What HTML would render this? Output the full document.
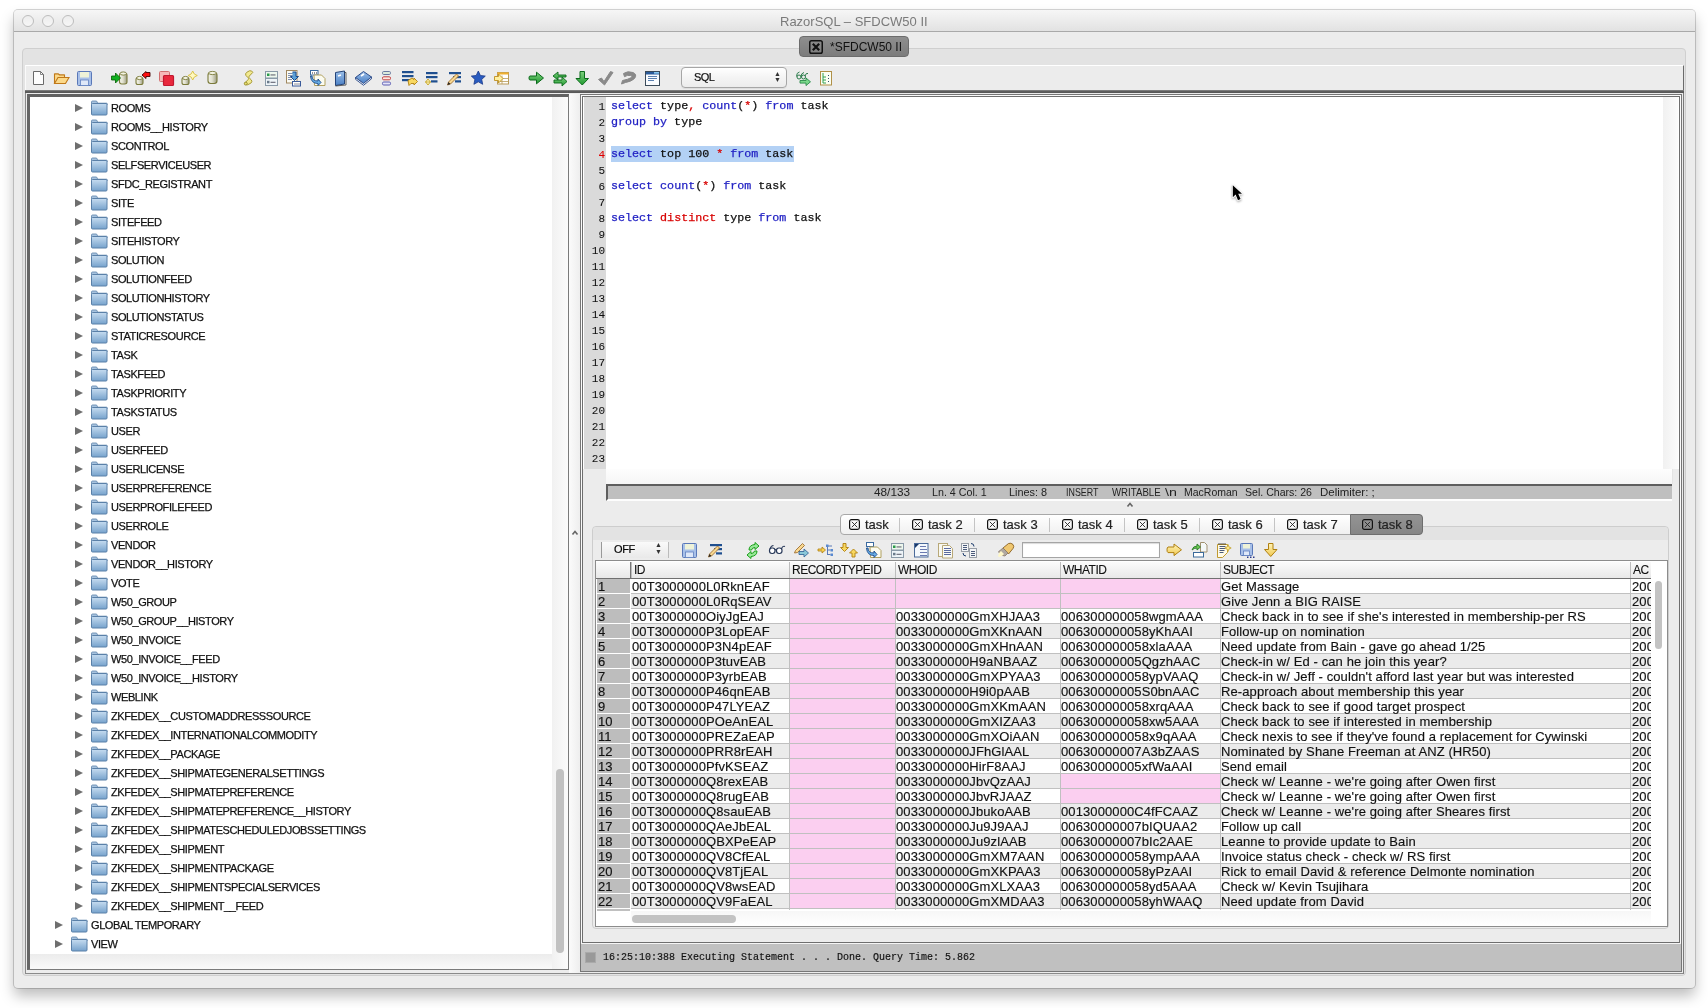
<!DOCTYPE html><html><head><meta charset="utf-8"><title>RazorSQL</title><style>
*{margin:0;padding:0;box-sizing:border-box}
html,body{width:1708px;height:1008px;overflow:hidden;background:#fff;font-family:"Liberation Sans",sans-serif;color:#000}
.a{position:absolute}
.t{position:absolute;white-space:nowrap;line-height:1}
#root{position:absolute;left:0;top:0;width:1708px;height:1008px;will-change:transform}

.tri{width:0;height:0;border-left:8px solid #6e6e6e;border-top:4.5px solid transparent;border-bottom:4.5px solid transparent}
.fold{width:17px;height:14px;border-radius:2px;background:linear-gradient(#b9d3ea,#7fa8cf);border:1px solid #6a8fb3}
.tr{font-size:11px;letter-spacing:-0.4px;color:#111;-webkit-text-stroke:0.25px #111}
.ln{font-family:"Liberation Mono",monospace;font-size:11px;color:#111;-webkit-text-stroke:0.05px currentColor}
.code{font-family:"Liberation Mono",monospace;font-size:11.7px;color:#111;-webkit-text-stroke:0.25px currentColor}
.stt{font-size:11px;color:#222;transform-origin:0 0}
.tabt{font-size:13px;color:#222;-webkit-text-stroke:0.2px #222}
.xb{width:10px;height:10px}
.hd{font-size:12px;letter-spacing:-0.5px;color:#111;-webkit-text-stroke:0.1px #111}
.rn{font-size:13px;color:#111;-webkit-text-stroke:0.15px #111}
.cell{font-size:13px;letter-spacing:0.1px;color:#111;-webkit-text-stroke:0.15px #111}
</style></head><body><div id="root">
<div class="a" style="left:14px;top:10px;width:1681px;height:978px;background:#ececec;border-radius:4px 4px 4px 4px;box-shadow:0 8px 14px rgba(0,0,0,0.26),0 0 0 1px rgba(0,0,0,0.17)"></div>
<div class="a" style="left:14px;top:10px;width:1681px;height:22px;border-radius:4px 4px 0 0;background:linear-gradient(#f6f6f6,#ececec 50%,#e2e2e2);border-bottom:1px solid #a9a9a9"></div>
<div class="a" style="left:22px;top:15px;width:12px;height:12px;border-radius:50%;border:1px solid #bdbdbd;background:linear-gradient(#ededed,#f6f6f6)"></div>
<div class="a" style="left:42px;top:15px;width:12px;height:12px;border-radius:50%;border:1px solid #bdbdbd;background:linear-gradient(#ededed,#f6f6f6)"></div>
<div class="a" style="left:62px;top:15px;width:12px;height:12px;border-radius:50%;border:1px solid #bdbdbd;background:linear-gradient(#ededed,#f6f6f6)"></div>
<div class="t" style="left:780px;top:15px;font-size:13px;color:#7a7a7a">RazorSQL &ndash; SFDCW50 II</div>
<div class="a" style="left:22px;top:48px;width:1664px;height:928px;border:1px solid #cfcfcf;border-radius:4px;background:#e3e3e3"></div>
<div class="a" style="left:799px;top:36px;width:110px;height:21px;border-radius:4px;background:linear-gradient(#8e8e8e,#7c7c7c);border:1px solid #6c6c6c"></div>
<svg class="a" style="left:809px;top:40px" width="14" height="14"><rect x="0.75" y="0.75" width="12.5" height="12.5" rx="1.8" fill="none" stroke="#111" stroke-width="1.5"/><path d="M3.8 3.8 L10.2 10.2 M10.2 3.8 L3.8 10.2" stroke="#111" stroke-width="2.2"/></svg>
<div class="t" style="left:830px;top:41px;font-size:12px;color:#111">*SFDCW50 II</div>
<div class="a" style="left:25px;top:65px;width:1659px;height:28px;background:#ececec;border-top:1px solid #fff;border-left:1px solid #fafafa;border-right:1px solid #6a6a6a"></div>
<div class="a" style="left:25px;top:90px;width:1659px;height:3px;background:linear-gradient(#8a8a8a,#555 60%,#5a5a5a)"></div>
<div class="a" style="left:681px;top:67px;width:106px;height:21px;border:1px solid #a6a6a6;border-radius:4px;background:linear-gradient(#ffffff,#f4f4f4 50%,#ececec);box-shadow:0 1px 0 rgba(0,0,0,0.06)"></div>
<div class="t" style="left:694px;top:72px;font-size:11px;letter-spacing:-0.6px;color:#111;-webkit-text-stroke:0.2px #111">SQL</div>
<div class="t" style="left:774px;top:71px;font-size:7px;line-height:6px;color:#333">&#x25B2;<br>&#x25BC;</div>
<div class="a" style="left:25px;top:93px;width:1659px;height:881px;background:#ececec;border-left:1px solid #8a8a8a;border-bottom:1px solid #8a8a8a;border-right:1px solid #7a7a7a"></div>
<div class="a" style="left:27px;top:94px;width:542px;height:876px;border-top:3px solid #626262;border-left:3px solid #666;border-right:1px solid #7a7a7a;border-bottom:1px solid #7a7a7a;background:#fff"></div>
<div class="a" style="left:569px;top:94px;width:11px;height:879px;background:linear-gradient(90deg,#fbfbfb,#eeeeee)"></div>
<div class="a" style="left:30px;top:954px;width:522px;height:15px;background:linear-gradient(#ececec,#f9f9f9)"></div>
<div class="a" style="left:552px;top:97px;width:16px;height:872px;background:linear-gradient(90deg,#f1f1f1,#fbfbfb)"></div>
<div class="a" style="left:556px;top:769px;width:8px;height:184px;border-radius:4px;background:#c1c1c1"></div>
<div class="a tri" style="left:75px;top:104px"></div>
<div class="t tr" style="left:111px;top:103px">ROOMS</div>
<div class="a tri" style="left:75px;top:123px"></div>
<div class="t tr" style="left:111px;top:122px">ROOMS__HISTORY</div>
<div class="a tri" style="left:75px;top:142px"></div>
<div class="t tr" style="left:111px;top:141px">SCONTROL</div>
<div class="a tri" style="left:75px;top:161px"></div>
<div class="t tr" style="left:111px;top:160px">SELFSERVICEUSER</div>
<div class="a tri" style="left:75px;top:180px"></div>
<div class="t tr" style="left:111px;top:179px">SFDC_REGISTRANT</div>
<div class="a tri" style="left:75px;top:199px"></div>
<div class="t tr" style="left:111px;top:198px">SITE</div>
<div class="a tri" style="left:75px;top:218px"></div>
<div class="t tr" style="left:111px;top:217px">SITEFEED</div>
<div class="a tri" style="left:75px;top:237px"></div>
<div class="t tr" style="left:111px;top:236px">SITEHISTORY</div>
<div class="a tri" style="left:75px;top:256px"></div>
<div class="t tr" style="left:111px;top:255px">SOLUTION</div>
<div class="a tri" style="left:75px;top:275px"></div>
<div class="t tr" style="left:111px;top:274px">SOLUTIONFEED</div>
<div class="a tri" style="left:75px;top:294px"></div>
<div class="t tr" style="left:111px;top:293px">SOLUTIONHISTORY</div>
<div class="a tri" style="left:75px;top:313px"></div>
<div class="t tr" style="left:111px;top:312px">SOLUTIONSTATUS</div>
<div class="a tri" style="left:75px;top:332px"></div>
<div class="t tr" style="left:111px;top:331px">STATICRESOURCE</div>
<div class="a tri" style="left:75px;top:351px"></div>
<div class="t tr" style="left:111px;top:350px">TASK</div>
<div class="a tri" style="left:75px;top:370px"></div>
<div class="t tr" style="left:111px;top:369px">TASKFEED</div>
<div class="a tri" style="left:75px;top:389px"></div>
<div class="t tr" style="left:111px;top:388px">TASKPRIORITY</div>
<div class="a tri" style="left:75px;top:408px"></div>
<div class="t tr" style="left:111px;top:407px">TASKSTATUS</div>
<div class="a tri" style="left:75px;top:427px"></div>
<div class="t tr" style="left:111px;top:426px">USER</div>
<div class="a tri" style="left:75px;top:446px"></div>
<div class="t tr" style="left:111px;top:445px">USERFEED</div>
<div class="a tri" style="left:75px;top:465px"></div>
<div class="t tr" style="left:111px;top:464px">USERLICENSE</div>
<div class="a tri" style="left:75px;top:484px"></div>
<div class="t tr" style="left:111px;top:483px">USERPREFERENCE</div>
<div class="a tri" style="left:75px;top:503px"></div>
<div class="t tr" style="left:111px;top:502px">USERPROFILEFEED</div>
<div class="a tri" style="left:75px;top:522px"></div>
<div class="t tr" style="left:111px;top:521px">USERROLE</div>
<div class="a tri" style="left:75px;top:541px"></div>
<div class="t tr" style="left:111px;top:540px">VENDOR</div>
<div class="a tri" style="left:75px;top:560px"></div>
<div class="t tr" style="left:111px;top:559px">VENDOR__HISTORY</div>
<div class="a tri" style="left:75px;top:579px"></div>
<div class="t tr" style="left:111px;top:578px">VOTE</div>
<div class="a tri" style="left:75px;top:598px"></div>
<div class="t tr" style="left:111px;top:597px">W50_GROUP</div>
<div class="a tri" style="left:75px;top:617px"></div>
<div class="t tr" style="left:111px;top:616px">W50_GROUP__HISTORY</div>
<div class="a tri" style="left:75px;top:636px"></div>
<div class="t tr" style="left:111px;top:635px">W50_INVOICE</div>
<div class="a tri" style="left:75px;top:655px"></div>
<div class="t tr" style="left:111px;top:654px">W50_INVOICE__FEED</div>
<div class="a tri" style="left:75px;top:674px"></div>
<div class="t tr" style="left:111px;top:673px">W50_INVOICE__HISTORY</div>
<div class="a tri" style="left:75px;top:693px"></div>
<div class="t tr" style="left:111px;top:692px">WEBLINK</div>
<div class="a tri" style="left:75px;top:712px"></div>
<div class="t tr" style="left:111px;top:711px">ZKFEDEX__CUSTOMADDRESSSOURCE</div>
<div class="a tri" style="left:75px;top:731px"></div>
<div class="t tr" style="left:111px;top:730px">ZKFEDEX__INTERNATIONALCOMMODITY</div>
<div class="a tri" style="left:75px;top:750px"></div>
<div class="t tr" style="left:111px;top:749px">ZKFEDEX__PACKAGE</div>
<div class="a tri" style="left:75px;top:769px"></div>
<div class="t tr" style="left:111px;top:768px">ZKFEDEX__SHIPMATEGENERALSETTINGS</div>
<div class="a tri" style="left:75px;top:788px"></div>
<div class="t tr" style="left:111px;top:787px">ZKFEDEX__SHIPMATEPREFERENCE</div>
<div class="a tri" style="left:75px;top:807px"></div>
<div class="t tr" style="left:111px;top:806px">ZKFEDEX__SHIPMATEPREFERENCE__HISTORY</div>
<div class="a tri" style="left:75px;top:826px"></div>
<div class="t tr" style="left:111px;top:825px">ZKFEDEX__SHIPMATESCHEDULEDJOBSSETTINGS</div>
<div class="a tri" style="left:75px;top:845px"></div>
<div class="t tr" style="left:111px;top:844px">ZKFEDEX__SHIPMENT</div>
<div class="a tri" style="left:75px;top:864px"></div>
<div class="t tr" style="left:111px;top:863px">ZKFEDEX__SHIPMENTPACKAGE</div>
<div class="a tri" style="left:75px;top:883px"></div>
<div class="t tr" style="left:111px;top:882px">ZKFEDEX__SHIPMENTSPECIALSERVICES</div>
<div class="a tri" style="left:75px;top:902px"></div>
<div class="t tr" style="left:111px;top:901px">ZKFEDEX__SHIPMENT__FEED</div>
<div class="a tri" style="left:55px;top:921px"></div>
<div class="t tr" style="left:91px;top:920px">GLOBAL TEMPORARY</div>
<div class="a tri" style="left:55px;top:940px"></div>
<div class="t tr" style="left:91px;top:939px">VIEW</div>
<svg class="a" style="left:571px;top:529px" width="8" height="8"><path d="M1.5 5.5 L4 2.5 L6.5 5.5" fill="none" stroke="#666" stroke-width="1.6"/></svg>
<div class="a" style="left:580px;top:94px;width:1102px;height:878px;border:1px solid #777;background:#fafafa"></div>
<div class="a" style="left:582px;top:96px;width:1098px;height:847px;border:1px solid #6e6e6e;background:#ececec"></div>
<div class="a" style="left:583px;top:97px;width:1096px;height:372px;background:#fff"></div>
<div class="a" style="left:584px;top:97px;width:22px;height:372px;background:#dadada"></div>
<div class="a" style="left:1663px;top:97px;width:15px;height:372px;background:linear-gradient(90deg,#f1f1f1,#fbfbfb)"></div>
<div class="a" style="left:606px;top:469px;width:1067px;height:15px;background:linear-gradient(#fdfdfd,#f6f6f6);border-right:1px solid #e4e4e4"></div>
<div class="t ln" style="right:1103px;top:102px;color:#111">1</div>
<div class="t ln" style="right:1103px;top:118px;color:#111">2</div>
<div class="t ln" style="right:1103px;top:134px;color:#111">3</div>
<div class="t ln" style="right:1103px;top:150px;color:#e00000">4</div>
<div class="t ln" style="right:1103px;top:166px;color:#111">5</div>
<div class="t ln" style="right:1103px;top:182px;color:#111">6</div>
<div class="t ln" style="right:1103px;top:198px;color:#111">7</div>
<div class="t ln" style="right:1103px;top:214px;color:#111">8</div>
<div class="t ln" style="right:1103px;top:230px;color:#111">9</div>
<div class="t ln" style="right:1103px;top:246px;color:#111">10</div>
<div class="t ln" style="right:1103px;top:262px;color:#111">11</div>
<div class="t ln" style="right:1103px;top:278px;color:#111">12</div>
<div class="t ln" style="right:1103px;top:294px;color:#111">13</div>
<div class="t ln" style="right:1103px;top:310px;color:#111">14</div>
<div class="t ln" style="right:1103px;top:326px;color:#111">15</div>
<div class="t ln" style="right:1103px;top:342px;color:#111">16</div>
<div class="t ln" style="right:1103px;top:358px;color:#111">17</div>
<div class="t ln" style="right:1103px;top:374px;color:#111">18</div>
<div class="t ln" style="right:1103px;top:390px;color:#111">19</div>
<div class="t ln" style="right:1103px;top:406px;color:#111">20</div>
<div class="t ln" style="right:1103px;top:422px;color:#111">21</div>
<div class="t ln" style="right:1103px;top:438px;color:#111">22</div>
<div class="t ln" style="right:1103px;top:454px;color:#111">23</div>
<div class="a" style="left:611px;top:146px;width:183px;height:16px;background:#b3d1f5"></div>
<div class="t code" style="left:611px;top:101px"><span style="color:#2222c4">select</span> type<span style="color:#d80000">,</span> <span style="color:#2222c4">count</span>(<span style="color:#d80000">*</span>) <span style="color:#2222c4">from</span> task</div>
<div class="t code" style="left:611px;top:117px"><span style="color:#2222c4">group by</span> type</div>
<div class="t code" style="left:611px;top:149px"><span style="color:#2222c4">select</span> top 100 <span style="color:#d80000">*</span> <span style="color:#2222c4">from</span> task</div>
<div class="t code" style="left:611px;top:181px"><span style="color:#2222c4">select</span> <span style="color:#2222c4">count</span>(<span style="color:#d80000">*</span>) <span style="color:#2222c4">from</span> task</div>
<div class="t code" style="left:611px;top:213px"><span style="color:#2222c4">select</span> <span style="color:#d80000">distinct</span> type <span style="color:#2222c4">from</span> task</div>
<div class="a" style="left:606px;top:484px;width:1066px;height:17px;background:#bfbfbf;border-top:2px solid #5e5e5e;border-left:2px solid #5e5e5e;border-bottom:2px solid #fdfdfd"></div>
<div class="t stt" style="left:874px;top:487px;transform:scaleX(1.072)">48/133</div>
<div class="t stt" style="left:932px;top:487px;transform:scaleX(0.972)">Ln. 4 Col. 1</div>
<div class="t stt" style="left:1009px;top:487px;transform:scaleX(0.986)">Lines: 8</div>
<div class="t stt" style="left:1066px;top:487px;transform:scaleX(0.807)">INSERT</div>
<div class="t stt" style="left:1112px;top:487px;transform:scaleX(0.878)">WRITABLE</div>
<div class="t stt" style="left:1165px;top:487px;transform:scaleX(1.295)">\n</div>
<div class="t stt" style="left:1184px;top:487px;transform:scaleX(0.954)">MacRoman</div>
<div class="t stt" style="left:1244.5px;top:487px;transform:scaleX(0.961)">Sel. Chars: 26</div>
<div class="t stt" style="left:1320px;top:487px;transform:scaleX(1.041)">Delimiter: ;</div>
<svg class="a" style="left:1126px;top:501px" width="8" height="8"><path d="M1.5 5.5 L4 2.5 L6.5 5.5" fill="none" stroke="#666" stroke-width="1.6"/></svg>
<div class="a" style="left:592px;top:526px;width:1077px;height:403px;border:1px solid #cdcdcd;border-radius:4px;background:#ececec"></div>
<div class="a" style="left:593px;top:527px;width:1075px;height:13px;border-radius:4px 4px 0 0;background:#e3e3e3"></div>
<div class="a" style="left:840px;top:514px;width:583px;height:21px;border:1px solid #a8a8a8;border-radius:4px;background:linear-gradient(#ffffff,#f0f0f0)"></div>
<div class="a" style="left:1350px;top:514px;width:73px;height:21px;border:1px solid #6e6e6e;border-radius:0 4px 4px 0;background:linear-gradient(#949494,#868686)"></div>
<div class="a" style="left:899px;top:518px;width:1px;height:14px;background:#c4c4c4"></div>
<div class="a" style="left:974px;top:518px;width:1px;height:14px;background:#c4c4c4"></div>
<div class="a" style="left:1049px;top:518px;width:1px;height:14px;background:#c4c4c4"></div>
<div class="a" style="left:1124px;top:518px;width:1px;height:14px;background:#c4c4c4"></div>
<div class="a" style="left:1199px;top:518px;width:1px;height:14px;background:#c4c4c4"></div>
<div class="a" style="left:1274px;top:518px;width:1px;height:14px;background:#c4c4c4"></div>
<svg class="a" style="left:849px;top:519px" width="11" height="11"><rect x="0.6" y="0.6" width="9.8" height="9.8" rx="1.8" fill="none" stroke="#111" stroke-width="1.2"/><path d="M2.8 2.8 L8.2 8.2 M8.2 2.8 L2.8 8.2" stroke="#222" stroke-width="0.9"/></svg>
<div class="t tabt" style="left:865px;top:517.5px">task</div>
<svg class="a" style="left:912px;top:519px" width="11" height="11"><rect x="0.6" y="0.6" width="9.8" height="9.8" rx="1.8" fill="none" stroke="#111" stroke-width="1.2"/><path d="M2.8 2.8 L8.2 8.2 M8.2 2.8 L2.8 8.2" stroke="#222" stroke-width="0.9"/></svg>
<div class="t tabt" style="left:928px;top:517.5px">task 2</div>
<svg class="a" style="left:987px;top:519px" width="11" height="11"><rect x="0.6" y="0.6" width="9.8" height="9.8" rx="1.8" fill="none" stroke="#111" stroke-width="1.2"/><path d="M2.8 2.8 L8.2 8.2 M8.2 2.8 L2.8 8.2" stroke="#222" stroke-width="0.9"/></svg>
<div class="t tabt" style="left:1003px;top:517.5px">task 3</div>
<svg class="a" style="left:1062px;top:519px" width="11" height="11"><rect x="0.6" y="0.6" width="9.8" height="9.8" rx="1.8" fill="none" stroke="#111" stroke-width="1.2"/><path d="M2.8 2.8 L8.2 8.2 M8.2 2.8 L2.8 8.2" stroke="#222" stroke-width="0.9"/></svg>
<div class="t tabt" style="left:1078px;top:517.5px">task 4</div>
<svg class="a" style="left:1137px;top:519px" width="11" height="11"><rect x="0.6" y="0.6" width="9.8" height="9.8" rx="1.8" fill="none" stroke="#111" stroke-width="1.2"/><path d="M2.8 2.8 L8.2 8.2 M8.2 2.8 L2.8 8.2" stroke="#222" stroke-width="0.9"/></svg>
<div class="t tabt" style="left:1153px;top:517.5px">task 5</div>
<svg class="a" style="left:1212px;top:519px" width="11" height="11"><rect x="0.6" y="0.6" width="9.8" height="9.8" rx="1.8" fill="none" stroke="#111" stroke-width="1.2"/><path d="M2.8 2.8 L8.2 8.2 M8.2 2.8 L2.8 8.2" stroke="#222" stroke-width="0.9"/></svg>
<div class="t tabt" style="left:1228px;top:517.5px">task 6</div>
<svg class="a" style="left:1287px;top:519px" width="11" height="11"><rect x="0.6" y="0.6" width="9.8" height="9.8" rx="1.8" fill="none" stroke="#111" stroke-width="1.2"/><path d="M2.8 2.8 L8.2 8.2 M8.2 2.8 L2.8 8.2" stroke="#222" stroke-width="0.9"/></svg>
<div class="t tabt" style="left:1303px;top:517.5px">task 7</div>
<svg class="a" style="left:1362px;top:519px" width="11" height="11"><rect x="0.6" y="0.6" width="9.8" height="9.8" rx="1.8" fill="none" stroke="#111" stroke-width="1.2"/><path d="M2.8 2.8 L8.2 8.2 M8.2 2.8 L2.8 8.2" stroke="#222" stroke-width="0.9"/></svg>
<div class="t tabt" style="left:1378px;top:517.5px">task 8</div>
<div class="a" style="left:601px;top:542px;width:68px;height:16px;border-left:1px solid #999;border-right:1px solid #bbb;background:linear-gradient(#fafafa,#e9e9e9)"></div>
<div class="t" style="left:614px;top:544px;font-size:11px;letter-spacing:-0.4px;-webkit-text-stroke:0.2px #111">OFF</div>
<div class="t" style="left:655px;top:541px;font-size:7px;line-height:7px;color:#333">&#x25B2;<br>&#x25BC;</div>
<div class="a" style="left:1022px;top:542px;width:138px;height:16px;border:1px solid #a5a5a5;background:#fff;box-shadow:inset 0 1px 1px rgba(0,0,0,.15)"></div>
<div class="a" style="left:595px;top:560px;width:1073px;height:367px;border:1px solid #8c8c8c;background:#fff"></div>
<div class="a" style="left:596px;top:562px;width:1055px;height:17px;background:linear-gradient(#fbfbfb,#e8e8e8);border-bottom:1px solid #707070"></div>
<div class="a" style="left:630px;top:562px;width:1px;height:16px;background:#777"></div>
<div class="a" style="left:631px;top:562px;width:1px;height:16px;background:#bdbdbd"></div>
<div class="t hd" style="left:634px;top:564px">ID</div>
<div class="a" style="left:789px;top:562px;width:1px;height:16px;background:#bdbdbd"></div>
<div class="t hd" style="left:792px;top:564px">RECORDTYPEID</div>
<div class="a" style="left:895px;top:562px;width:1px;height:16px;background:#bdbdbd"></div>
<div class="t hd" style="left:898px;top:564px">WHOID</div>
<div class="a" style="left:1060px;top:562px;width:1px;height:16px;background:#bdbdbd"></div>
<div class="t hd" style="left:1063px;top:564px">WHATID</div>
<div class="a" style="left:1220px;top:562px;width:1px;height:16px;background:#bdbdbd"></div>
<div class="t hd" style="left:1223px;top:564px">SUBJECT</div>
<div class="a" style="left:1630px;top:562px;width:1px;height:16px;background:#bdbdbd"></div>
<div class="t hd" style="left:1633px;top:564px">AC</div>
<div class="a" style="left:597px;top:579px;width:33px;height:14px;background:#bdbdbd"></div>
<div class="t rn" style="left:598px;top:580px">1</div>
<div class="a" style="left:631px;top:579px;width:1020px;height:14px;background:#ffffff"></div>
<div class="a" style="left:631px;top:593px;width:1020px;height:1px;background:#c0c0c0"></div>
<div class="t cell" style="left:632px;top:580px">00T3000000L0RknEAF</div>
<div class="a" style="left:789px;top:579px;width:106px;height:14px;background:#fbcff0"></div>
<div class="a" style="left:895px;top:579px;width:165px;height:14px;background:#fbcff0"></div>
<div class="a" style="left:1060px;top:579px;width:160px;height:14px;background:#fbcff0"></div>
<div class="t cell" style="left:1221px;top:580px">Get Massage</div>
<div class="t cell" style="left:1632px;top:580px;width:19px;overflow:hidden">2009</div>
<div class="a" style="left:597px;top:594px;width:33px;height:14px;background:#bdbdbd"></div>
<div class="t rn" style="left:598px;top:595px">2</div>
<div class="a" style="left:631px;top:594px;width:1020px;height:14px;background:#ebebeb"></div>
<div class="a" style="left:631px;top:608px;width:1020px;height:1px;background:#c0c0c0"></div>
<div class="t cell" style="left:632px;top:595px">00T3000000L0RqSEAV</div>
<div class="a" style="left:789px;top:594px;width:106px;height:14px;background:#fbcff0"></div>
<div class="a" style="left:895px;top:594px;width:165px;height:14px;background:#fbcff0"></div>
<div class="a" style="left:1060px;top:594px;width:160px;height:14px;background:#fbcff0"></div>
<div class="t cell" style="left:1221px;top:595px">Give Jenn a BIG RAISE</div>
<div class="t cell" style="left:1632px;top:595px;width:19px;overflow:hidden">2009</div>
<div class="a" style="left:597px;top:609px;width:33px;height:14px;background:#bdbdbd"></div>
<div class="t rn" style="left:598px;top:610px">3</div>
<div class="a" style="left:631px;top:609px;width:1020px;height:14px;background:#ffffff"></div>
<div class="a" style="left:631px;top:623px;width:1020px;height:1px;background:#c0c0c0"></div>
<div class="t cell" style="left:632px;top:610px">00T3000000OiyJgEAJ</div>
<div class="a" style="left:789px;top:609px;width:106px;height:14px;background:#fbcff0"></div>
<div class="t cell" style="left:896px;top:610px">0033000000GmXHJAA3</div>
<div class="t cell" style="left:1061px;top:610px">006300000058wgmAAA</div>
<div class="t cell" style="left:1221px;top:610px">Check back in to see if she's interested in membership-per RS</div>
<div class="t cell" style="left:1632px;top:610px;width:19px;overflow:hidden">2009</div>
<div class="a" style="left:597px;top:624px;width:33px;height:14px;background:#bdbdbd"></div>
<div class="t rn" style="left:598px;top:625px">4</div>
<div class="a" style="left:631px;top:624px;width:1020px;height:14px;background:#ebebeb"></div>
<div class="a" style="left:631px;top:638px;width:1020px;height:1px;background:#c0c0c0"></div>
<div class="t cell" style="left:632px;top:625px">00T3000000P3LopEAF</div>
<div class="a" style="left:789px;top:624px;width:106px;height:14px;background:#fbcff0"></div>
<div class="t cell" style="left:896px;top:625px">0033000000GmXKnAAN</div>
<div class="t cell" style="left:1061px;top:625px">006300000058yKhAAI</div>
<div class="t cell" style="left:1221px;top:625px">Follow-up on nomination</div>
<div class="t cell" style="left:1632px;top:625px;width:19px;overflow:hidden">2009</div>
<div class="a" style="left:597px;top:639px;width:33px;height:14px;background:#bdbdbd"></div>
<div class="t rn" style="left:598px;top:640px">5</div>
<div class="a" style="left:631px;top:639px;width:1020px;height:14px;background:#ffffff"></div>
<div class="a" style="left:631px;top:653px;width:1020px;height:1px;background:#c0c0c0"></div>
<div class="t cell" style="left:632px;top:640px">00T3000000P3N4pEAF</div>
<div class="a" style="left:789px;top:639px;width:106px;height:14px;background:#fbcff0"></div>
<div class="t cell" style="left:896px;top:640px">0033000000GmXHnAAN</div>
<div class="t cell" style="left:1061px;top:640px">006300000058xlaAAA</div>
<div class="t cell" style="left:1221px;top:640px">Need update from Bain - gave go ahead 1/25</div>
<div class="t cell" style="left:1632px;top:640px;width:19px;overflow:hidden">2009</div>
<div class="a" style="left:597px;top:654px;width:33px;height:14px;background:#bdbdbd"></div>
<div class="t rn" style="left:598px;top:655px">6</div>
<div class="a" style="left:631px;top:654px;width:1020px;height:14px;background:#ebebeb"></div>
<div class="a" style="left:631px;top:668px;width:1020px;height:1px;background:#c0c0c0"></div>
<div class="t cell" style="left:632px;top:655px">00T3000000P3tuvEAB</div>
<div class="a" style="left:789px;top:654px;width:106px;height:14px;background:#fbcff0"></div>
<div class="t cell" style="left:896px;top:655px">0033000000H9aNBAAZ</div>
<div class="t cell" style="left:1061px;top:655px">00630000005QgzhAAC</div>
<div class="t cell" style="left:1221px;top:655px">Check-in w/ Ed - can he join this year?</div>
<div class="t cell" style="left:1632px;top:655px;width:19px;overflow:hidden">2009</div>
<div class="a" style="left:597px;top:669px;width:33px;height:14px;background:#bdbdbd"></div>
<div class="t rn" style="left:598px;top:670px">7</div>
<div class="a" style="left:631px;top:669px;width:1020px;height:14px;background:#ffffff"></div>
<div class="a" style="left:631px;top:683px;width:1020px;height:1px;background:#c0c0c0"></div>
<div class="t cell" style="left:632px;top:670px">00T3000000P3yrbEAB</div>
<div class="a" style="left:789px;top:669px;width:106px;height:14px;background:#fbcff0"></div>
<div class="t cell" style="left:896px;top:670px">0033000000GmXPYAA3</div>
<div class="t cell" style="left:1061px;top:670px">006300000058ypVAAQ</div>
<div class="t cell" style="left:1221px;top:670px">Check-in w/ Jeff - couldn't afford last year but was interested</div>
<div class="t cell" style="left:1632px;top:670px;width:19px;overflow:hidden">2009</div>
<div class="a" style="left:597px;top:684px;width:33px;height:14px;background:#bdbdbd"></div>
<div class="t rn" style="left:598px;top:685px">8</div>
<div class="a" style="left:631px;top:684px;width:1020px;height:14px;background:#ebebeb"></div>
<div class="a" style="left:631px;top:698px;width:1020px;height:1px;background:#c0c0c0"></div>
<div class="t cell" style="left:632px;top:685px">00T3000000P46qnEAB</div>
<div class="a" style="left:789px;top:684px;width:106px;height:14px;background:#fbcff0"></div>
<div class="t cell" style="left:896px;top:685px">0033000000H9i0pAAB</div>
<div class="t cell" style="left:1061px;top:685px">00630000005S0bnAAC</div>
<div class="t cell" style="left:1221px;top:685px">Re-approach about membership this year</div>
<div class="t cell" style="left:1632px;top:685px;width:19px;overflow:hidden">2009</div>
<div class="a" style="left:597px;top:699px;width:33px;height:14px;background:#bdbdbd"></div>
<div class="t rn" style="left:598px;top:700px">9</div>
<div class="a" style="left:631px;top:699px;width:1020px;height:14px;background:#ffffff"></div>
<div class="a" style="left:631px;top:713px;width:1020px;height:1px;background:#c0c0c0"></div>
<div class="t cell" style="left:632px;top:700px">00T3000000P47LYEAZ</div>
<div class="a" style="left:789px;top:699px;width:106px;height:14px;background:#fbcff0"></div>
<div class="t cell" style="left:896px;top:700px">0033000000GmXKmAAN</div>
<div class="t cell" style="left:1061px;top:700px">006300000058xrqAAA</div>
<div class="t cell" style="left:1221px;top:700px">Check back to see if good target prospect</div>
<div class="t cell" style="left:1632px;top:700px;width:19px;overflow:hidden">2009</div>
<div class="a" style="left:597px;top:714px;width:33px;height:14px;background:#bdbdbd"></div>
<div class="t rn" style="left:598px;top:715px">10</div>
<div class="a" style="left:631px;top:714px;width:1020px;height:14px;background:#ebebeb"></div>
<div class="a" style="left:631px;top:728px;width:1020px;height:1px;background:#c0c0c0"></div>
<div class="t cell" style="left:632px;top:715px">00T3000000POeAnEAL</div>
<div class="a" style="left:789px;top:714px;width:106px;height:14px;background:#fbcff0"></div>
<div class="t cell" style="left:896px;top:715px">0033000000GmXIZAA3</div>
<div class="t cell" style="left:1061px;top:715px">006300000058xw5AAA</div>
<div class="t cell" style="left:1221px;top:715px">Check back to see if interested in membership</div>
<div class="t cell" style="left:1632px;top:715px;width:19px;overflow:hidden">2009</div>
<div class="a" style="left:597px;top:729px;width:33px;height:14px;background:#bdbdbd"></div>
<div class="t rn" style="left:598px;top:730px">11</div>
<div class="a" style="left:631px;top:729px;width:1020px;height:14px;background:#ffffff"></div>
<div class="a" style="left:631px;top:743px;width:1020px;height:1px;background:#c0c0c0"></div>
<div class="t cell" style="left:632px;top:730px">00T3000000PREZaEAP</div>
<div class="a" style="left:789px;top:729px;width:106px;height:14px;background:#fbcff0"></div>
<div class="t cell" style="left:896px;top:730px">0033000000GmXOiAAN</div>
<div class="t cell" style="left:1061px;top:730px">006300000058x9qAAA</div>
<div class="t cell" style="left:1221px;top:730px">Check nexis to see if they've found a replacement for Cywinski</div>
<div class="t cell" style="left:1632px;top:730px;width:19px;overflow:hidden">2009</div>
<div class="a" style="left:597px;top:744px;width:33px;height:14px;background:#bdbdbd"></div>
<div class="t rn" style="left:598px;top:745px">12</div>
<div class="a" style="left:631px;top:744px;width:1020px;height:14px;background:#ebebeb"></div>
<div class="a" style="left:631px;top:758px;width:1020px;height:1px;background:#c0c0c0"></div>
<div class="t cell" style="left:632px;top:745px">00T3000000PRR8rEAH</div>
<div class="a" style="left:789px;top:744px;width:106px;height:14px;background:#fbcff0"></div>
<div class="t cell" style="left:896px;top:745px">0033000000JFhGlAAL</div>
<div class="t cell" style="left:1061px;top:745px">00630000007A3bZAAS</div>
<div class="t cell" style="left:1221px;top:745px">Nominated by Shane Freeman at ANZ (HR50)</div>
<div class="t cell" style="left:1632px;top:745px;width:19px;overflow:hidden">2009</div>
<div class="a" style="left:597px;top:759px;width:33px;height:14px;background:#bdbdbd"></div>
<div class="t rn" style="left:598px;top:760px">13</div>
<div class="a" style="left:631px;top:759px;width:1020px;height:14px;background:#ffffff"></div>
<div class="a" style="left:631px;top:773px;width:1020px;height:1px;background:#c0c0c0"></div>
<div class="t cell" style="left:632px;top:760px">00T3000000PfvKSEAZ</div>
<div class="a" style="left:789px;top:759px;width:106px;height:14px;background:#fbcff0"></div>
<div class="t cell" style="left:896px;top:760px">0033000000HirF8AAJ</div>
<div class="t cell" style="left:1061px;top:760px">00630000005xfWaAAI</div>
<div class="t cell" style="left:1221px;top:760px">Send email</div>
<div class="t cell" style="left:1632px;top:760px;width:19px;overflow:hidden">2009</div>
<div class="a" style="left:597px;top:774px;width:33px;height:14px;background:#bdbdbd"></div>
<div class="t rn" style="left:598px;top:775px">14</div>
<div class="a" style="left:631px;top:774px;width:1020px;height:14px;background:#ebebeb"></div>
<div class="a" style="left:631px;top:788px;width:1020px;height:1px;background:#c0c0c0"></div>
<div class="t cell" style="left:632px;top:775px">00T3000000Q8rexEAB</div>
<div class="a" style="left:789px;top:774px;width:106px;height:14px;background:#fbcff0"></div>
<div class="t cell" style="left:896px;top:775px">0033000000JbvQzAAJ</div>
<div class="a" style="left:1060px;top:774px;width:160px;height:14px;background:#fbcff0"></div>
<div class="t cell" style="left:1221px;top:775px">Check w/ Leanne - we're going after Owen first</div>
<div class="t cell" style="left:1632px;top:775px;width:19px;overflow:hidden">2009</div>
<div class="a" style="left:597px;top:789px;width:33px;height:14px;background:#bdbdbd"></div>
<div class="t rn" style="left:598px;top:790px">15</div>
<div class="a" style="left:631px;top:789px;width:1020px;height:14px;background:#ffffff"></div>
<div class="a" style="left:631px;top:803px;width:1020px;height:1px;background:#c0c0c0"></div>
<div class="t cell" style="left:632px;top:790px">00T3000000Q8rugEAB</div>
<div class="a" style="left:789px;top:789px;width:106px;height:14px;background:#fbcff0"></div>
<div class="t cell" style="left:896px;top:790px">0033000000JbvRJAAZ</div>
<div class="a" style="left:1060px;top:789px;width:160px;height:14px;background:#fbcff0"></div>
<div class="t cell" style="left:1221px;top:790px">Check w/ Leanne - we're going after Owen first</div>
<div class="t cell" style="left:1632px;top:790px;width:19px;overflow:hidden">2009</div>
<div class="a" style="left:597px;top:804px;width:33px;height:14px;background:#bdbdbd"></div>
<div class="t rn" style="left:598px;top:805px">16</div>
<div class="a" style="left:631px;top:804px;width:1020px;height:14px;background:#ebebeb"></div>
<div class="a" style="left:631px;top:818px;width:1020px;height:1px;background:#c0c0c0"></div>
<div class="t cell" style="left:632px;top:805px">00T3000000Q8sauEAB</div>
<div class="a" style="left:789px;top:804px;width:106px;height:14px;background:#fbcff0"></div>
<div class="t cell" style="left:896px;top:805px">0033000000JbukoAAB</div>
<div class="t cell" style="left:1061px;top:805px">0013000000C4fFCAAZ</div>
<div class="t cell" style="left:1221px;top:805px">Check w/ Leanne - we're going after Sheares first</div>
<div class="t cell" style="left:1632px;top:805px;width:19px;overflow:hidden">2009</div>
<div class="a" style="left:597px;top:819px;width:33px;height:14px;background:#bdbdbd"></div>
<div class="t rn" style="left:598px;top:820px">17</div>
<div class="a" style="left:631px;top:819px;width:1020px;height:14px;background:#ffffff"></div>
<div class="a" style="left:631px;top:833px;width:1020px;height:1px;background:#c0c0c0"></div>
<div class="t cell" style="left:632px;top:820px">00T3000000QAeJbEAL</div>
<div class="a" style="left:789px;top:819px;width:106px;height:14px;background:#fbcff0"></div>
<div class="t cell" style="left:896px;top:820px">0033000000Ju9J9AAJ</div>
<div class="t cell" style="left:1061px;top:820px">00630000007bIQUAA2</div>
<div class="t cell" style="left:1221px;top:820px">Follow up call</div>
<div class="t cell" style="left:1632px;top:820px;width:19px;overflow:hidden">2009</div>
<div class="a" style="left:597px;top:834px;width:33px;height:14px;background:#bdbdbd"></div>
<div class="t rn" style="left:598px;top:835px">18</div>
<div class="a" style="left:631px;top:834px;width:1020px;height:14px;background:#ebebeb"></div>
<div class="a" style="left:631px;top:848px;width:1020px;height:1px;background:#c0c0c0"></div>
<div class="t cell" style="left:632px;top:835px">00T3000000QBXPeEAP</div>
<div class="a" style="left:789px;top:834px;width:106px;height:14px;background:#fbcff0"></div>
<div class="t cell" style="left:896px;top:835px">0033000000Ju9zlAAB</div>
<div class="t cell" style="left:1061px;top:835px">00630000007bIc2AAE</div>
<div class="t cell" style="left:1221px;top:835px">Leanne to provide update to Bain</div>
<div class="t cell" style="left:1632px;top:835px;width:19px;overflow:hidden">2009</div>
<div class="a" style="left:597px;top:849px;width:33px;height:14px;background:#bdbdbd"></div>
<div class="t rn" style="left:598px;top:850px">19</div>
<div class="a" style="left:631px;top:849px;width:1020px;height:14px;background:#ffffff"></div>
<div class="a" style="left:631px;top:863px;width:1020px;height:1px;background:#c0c0c0"></div>
<div class="t cell" style="left:632px;top:850px">00T3000000QV8CfEAL</div>
<div class="a" style="left:789px;top:849px;width:106px;height:14px;background:#fbcff0"></div>
<div class="t cell" style="left:896px;top:850px">0033000000GmXM7AAN</div>
<div class="t cell" style="left:1061px;top:850px">006300000058ympAAA</div>
<div class="t cell" style="left:1221px;top:850px">Invoice status check - check w/ RS first</div>
<div class="t cell" style="left:1632px;top:850px;width:19px;overflow:hidden">2009</div>
<div class="a" style="left:597px;top:864px;width:33px;height:14px;background:#bdbdbd"></div>
<div class="t rn" style="left:598px;top:865px">20</div>
<div class="a" style="left:631px;top:864px;width:1020px;height:14px;background:#ebebeb"></div>
<div class="a" style="left:631px;top:878px;width:1020px;height:1px;background:#c0c0c0"></div>
<div class="t cell" style="left:632px;top:865px">00T3000000QV8TjEAL</div>
<div class="a" style="left:789px;top:864px;width:106px;height:14px;background:#fbcff0"></div>
<div class="t cell" style="left:896px;top:865px">0033000000GmXKPAA3</div>
<div class="t cell" style="left:1061px;top:865px">006300000058yPzAAI</div>
<div class="t cell" style="left:1221px;top:865px">Rick to email David & reference Delmonte nomination</div>
<div class="t cell" style="left:1632px;top:865px;width:19px;overflow:hidden">2009</div>
<div class="a" style="left:597px;top:879px;width:33px;height:14px;background:#bdbdbd"></div>
<div class="t rn" style="left:598px;top:880px">21</div>
<div class="a" style="left:631px;top:879px;width:1020px;height:14px;background:#ffffff"></div>
<div class="a" style="left:631px;top:893px;width:1020px;height:1px;background:#c0c0c0"></div>
<div class="t cell" style="left:632px;top:880px">00T3000000QV8wsEAD</div>
<div class="a" style="left:789px;top:879px;width:106px;height:14px;background:#fbcff0"></div>
<div class="t cell" style="left:896px;top:880px">0033000000GmXLXAA3</div>
<div class="t cell" style="left:1061px;top:880px">006300000058yd5AAA</div>
<div class="t cell" style="left:1221px;top:880px">Check w/ Kevin Tsujihara</div>
<div class="t cell" style="left:1632px;top:880px;width:19px;overflow:hidden">2009</div>
<div class="a" style="left:597px;top:894px;width:33px;height:14px;background:#bdbdbd"></div>
<div class="t rn" style="left:598px;top:895px">22</div>
<div class="a" style="left:631px;top:894px;width:1020px;height:14px;background:#ebebeb"></div>
<div class="a" style="left:631px;top:908px;width:1020px;height:1px;background:#c0c0c0"></div>
<div class="t cell" style="left:632px;top:895px">00T3000000QV9FaEAL</div>
<div class="a" style="left:789px;top:894px;width:106px;height:14px;background:#fbcff0"></div>
<div class="t cell" style="left:896px;top:895px">0033000000GmXMDAA3</div>
<div class="t cell" style="left:1061px;top:895px">006300000058yhWAAQ</div>
<div class="t cell" style="left:1221px;top:895px">Need update from David</div>
<div class="t cell" style="left:1632px;top:895px;width:19px;overflow:hidden">2009</div>
<div class="a" style="left:789px;top:579px;width:1px;height:331px;background:#c0c0c0"></div>
<div class="a" style="left:895px;top:579px;width:1px;height:331px;background:#c0c0c0"></div>
<div class="a" style="left:1060px;top:579px;width:1px;height:331px;background:#c0c0c0"></div>
<div class="a" style="left:1220px;top:579px;width:1px;height:331px;background:#c0c0c0"></div>
<div class="a" style="left:1630px;top:579px;width:1px;height:331px;background:#c0c0c0"></div>
<div class="a" style="left:1651px;top:579px;width:1px;height:331px;background:#c0c0c0"></div>
<div class="a" style="left:1651px;top:561px;width:16px;height:365px;background:#fff"></div>
<div class="a" style="left:1655px;top:581px;width:7px;height:68px;border-radius:4px;background:#c3c3c3"></div>
<div class="a" style="left:597px;top:909px;width:33px;height:2px;background:#c0c0c0"></div>
<div class="a" style="left:631px;top:911px;width:1020px;height:15px;background:linear-gradient(#f7f7f7,#fff)"></div>
<div class="a" style="left:632px;top:915px;width:104px;height:8px;border-radius:4px;background:#c3c3c3"></div>
<div class="a" style="left:581px;top:943px;width:1100px;height:28px;background:#c0c0c0;border-top:1px solid #f4f4f4"></div>
<div class="a" style="left:585px;top:952px;width:11px;height:11px;background:#999;border:1px solid #aaa"></div>
<div class="t" style="left:603px;top:953px;font-family:'Liberation Mono',monospace;font-size:10px;letter-spacing:0;color:#111;-webkit-text-stroke:0.15px #111">16:25:10:388 Executing Statement . . . Done. Query Time: 5.862</div>
<svg class="a" style="left:0;top:0" width="1708" height="1008" viewBox="0 0 1708 1008"><defs><linearGradient id="gcyl" x1="0" x2="1"><stop offset="0" stop-color="#f4f4ec"/><stop offset="0.45" stop-color="#e2e2d0"/><stop offset="1" stop-color="#9a9a80"/></linearGradient><linearGradient id="ggreen" x1="0" y1="0" x2="0" y2="1"><stop offset="0" stop-color="#7fd07f"/><stop offset="1" stop-color="#1f9a2f"/></linearGradient><linearGradient id="gyel" x1="0" y1="0" x2="0" y2="1"><stop offset="0" stop-color="#fff4b8"/><stop offset="1" stop-color="#f0c850"/></linearGradient><linearGradient id="gblue" x1="0" y1="0" x2="0" y2="1"><stop offset="0" stop-color="#9cc0ea"/><stop offset="1" stop-color="#4a7fc4"/></linearGradient><linearGradient id="gfold" x1="0" y1="0" x2="0" y2="1"><stop offset="0" stop-color="#c6dcf0"/><stop offset="1" stop-color="#76a2cc"/></linearGradient></defs><path d="M33.5 71.5 H40.5 L43.5 74.5 V84.5 H33.5 Z" fill="#fdfdfd" stroke="#6a6a6a" stroke-width="1"/><path d="M40.5 71.5 V74.5 H43.5" fill="none" stroke="#6a6a6a" stroke-width="0.8"/><path d="M54.5 74 h4 l1 1 h5 v2.5" fill="#f8dc98" stroke="#c08020" stroke-width="1"/><path d="M54.5 83.5 V74 h4 l1 1 h5 v2.5 M54.5 83.5 L58 77.5 H69 L65.5 83.5 Z" fill="#fbd98a" stroke="#c07818" stroke-width="1.1"/><rect x="77.5" y="71.5" width="14" height="14" rx="1" fill="#a8c0e8" stroke="#5a78b8" stroke-width="1"/><rect x="80" y="72" width="9" height="5.5" fill="#eef2d8"/><rect x="80.5" y="80" width="8" height="5.5" fill="#dfe8f8" stroke="#6080c0" stroke-width="0.8"/><rect x="119.5" y="73.0" width="7.5" height="11" rx="2.25" fill="url(#gcyl)" stroke="#7a7a3a" stroke-width="1.1"/><ellipse cx="123.25" cy="73.5" rx="3.15" ry="1.6" fill="#f4f4e4" stroke="#7a7a3a" stroke-width="0.9"/><path d="M111.5 76 h4 v-3 l5 5 -5 5 v-3 h-4 z" fill="#10b020" stroke="#006000" stroke-width="0.8"/><rect x="136" y="77.5" width="7" height="7" rx="2.1" fill="url(#gcyl)" stroke="#7a7a3a" stroke-width="1.1"/><ellipse cx="139.5" cy="78" rx="2.9" ry="1.6" fill="#f4f4e4" stroke="#7a7a3a" stroke-width="0.9"/><path d="M150 72.5 v4 h-4 v2 l-4 -3.5 4 -3.5 v1 z" fill="#ff1010" stroke="#400" stroke-width="0.9"/><rect x="159.5" y="71.5" width="10" height="10" rx="1" fill="#f6b8b8" stroke="#d07070" stroke-width="1"/><rect x="163.5" y="75.5" width="10" height="10" rx="1" fill="#e8283c" stroke="#c01830" stroke-width="1.2"/><rect x="182" y="77.5" width="7" height="7" rx="2.1" fill="url(#gcyl)" stroke="#7a7a3a" stroke-width="1.1"/><ellipse cx="185.5" cy="78" rx="2.9" ry="1.6" fill="#f4f4e4" stroke="#7a7a3a" stroke-width="0.9"/><path d="M192.7 71 l1.6 3 3 1.5 -3 1.5 -1.6 3 -1.6 -3 -3 -1.5 3 -1.5z" fill="#fff8c0" stroke="#d8c040" stroke-width="0.9"/><rect x="208" y="72.5" width="9" height="11" rx="2.6999999999999997" fill="url(#gcyl)" stroke="#7a7a3a" stroke-width="1.1"/><ellipse cx="212.5" cy="73" rx="3.9" ry="1.6" fill="#f4f4e4" stroke="#7a7a3a" stroke-width="0.9"/><path d="M249.5 70.8 q2.5 -0.5 3.3 1.6 l-3.6 3.8 q-0.8 1.2 0.6 2.4 l1.6 1.4 q1.2 1.8 -0.6 3.2 l-3.2 1.6 q-2.2 0.3 -2.9 -1.6 l3.4 -3.6 q0.9 -1 -0.3 -2.2 l-1.8 -1.8 q-1.2 -1.8 0.6 -3.2z" fill="#f2ea90" stroke="#a89a38" stroke-width="1"/><circle cx="245.8" cy="83.6" r="1.5" fill="#e6dc70" stroke="#8a8020" stroke-width="0.8"/><rect x="265.5" y="71.5" width="12" height="6.5" fill="#eef8ee" stroke="#8a9aa8" stroke-width="1"/><rect x="265.5" y="78.5" width="12" height="7" fill="#eef4f8" stroke="#8a9aa8" stroke-width="1"/><rect x="267" y="73.5" width="2.5" height="2.5" fill="#2a9a4a"/><rect x="267" y="80.8" width="2.5" height="2.5" fill="#6a7a8a"/><rect x="270.5" y="74.5" width="5" height="0.9" fill="#445"/><rect x="270.5" y="81.8" width="5" height="0.9" fill="#445"/><rect x="286.5" y="70.5" width="10.5" height="12.5" fill="#fbfbf4" stroke="#a08860" stroke-width="1"/><path fill="none" d="M288 73.5h6 M288 75.5h5 M288 77.5h6 M288 79.5h4" stroke="#8090b0" stroke-width="1"/><path d="M292.5 72 h3.5 v4.5 h2.5 l-4 4 -4 -4 h2" fill="#5aa0d8" stroke="#1a4a8a" stroke-width="1"/><rect x="292.5" y="81.5" width="8" height="4.5" fill="#fff" stroke="#3a5a9a" stroke-width="1"/><path d="M294.5 84 h1 M296.5 84 h1 M298.5 84 h1" stroke="#223" stroke-width="1"/><rect x="310.5" y="70.5" width="7.5" height="4.5" fill="#fff" stroke="#3a6aa0" stroke-width="1"/><path d="M312 73 h1 M314 73 h1 M316 73 h1" stroke="#223" stroke-width="1"/><path d="M314 75 h7.5 l3.5 3.5 v7 h-10.5z" fill="#fbfbf0" stroke="#b0a060" stroke-width="1"/><path d="M312 76 q0 5 6 5 v-2 l3 3.5 -3 3 v-2 q-7 0 -7.5 -7.5z" fill="#6ab0e8" stroke="#1a4a8a" stroke-width="0.9"/><path d="M335.5 72.5 l9 -1.5 v13 l-9 1.5z" fill="url(#gblue)" stroke="#24447a" stroke-width="1"/><path d="M344.5 72.5 h1.5 v12.5 l-10.5 1" fill="none" stroke="#404040" stroke-width="0.8"/><path fill="none" d="M338 76 l3 -1" stroke="#fff" stroke-width="1.4"/><path d="M355.5 77.5 l8 -6 8 5.5 -8 6.5z" fill="url(#gblue)" stroke="#2a4a88" stroke-width="1"/><path d="M355.5 77.5 v1.8 l8 6 8 -6.5 v-1.8 l-8 6.5z" fill="#f4f6fa" stroke="#2a4a88" stroke-width="0.9"/><path d="M361 76 l3 -2" stroke="#fff" stroke-width="1.6"/><rect x="382.5" y="71.5" width="8" height="3" rx="1.2" fill="#dcebdc" stroke="#6a7aa0" stroke-width="1"/><rect x="382.5" y="76.8" width="8" height="3" rx="1.2" fill="#fde8e0" stroke="#c04040" stroke-width="1"/><rect x="382.5" y="82" width="8" height="3" rx="1.2" fill="#e4e4f8" stroke="#5a5ab0" stroke-width="1"/><rect x="402" y="71" width="11.5" height="2.2" fill="#1f4f8f"/><rect x="402" y="75" width="11.5" height="2.2" fill="#1f4f8f"/><rect x="402" y="79" width="11.5" height="2.2" fill="#1f4f8f"/><path d="M408 80.5 l4 -2.5 2 1.5 v-1.5 l3.5 3.5 -3.5 3.5 v-1.5 h-3 l-2 2z" fill="#f8d860" stroke="#b08010" stroke-width="0.9"/><rect x="426" y="72" width="11.5" height="2.2" fill="#1f4f8f"/><rect x="426" y="76" width="11.5" height="2.2" fill="#1f4f8f"/><rect x="431" y="80.3" width="6.5" height="2.2" fill="#1f4f8f"/><path d="M428 79 l2.3 3 -2.3 3 -2.3 -3z" fill="#fff8c0" stroke="#c8a830" stroke-width="1"/><path fill="none" d="M425 82 h6" stroke="#c8a830" stroke-width="0.9"/><rect x="449" y="72" width="12" height="2.2" fill="#1f4f8f"/><rect x="453" y="76" width="8" height="2.2" fill="#1f4f8f"/><rect x="455" y="80.3" width="6" height="2.2" fill="#1f4f8f"/><path d="M447.5 85 l1 -3 8 -8 2 2 -8 8z" fill="#f8d890" stroke="#a07030" stroke-width="0.9"/><path d="M447.5 85 l1 -3 2 2z" fill="#222"/><path d="M478.3 71 l2.1 4.5 4.9 0.6 -3.6 3.3 1 4.9 -4.4 -2.5 -4.4 2.5 1 -4.9 -3.6 -3.3 4.9 -0.6z" fill="#2a5cc0" stroke="#1a3a8a" stroke-width="0.8"/><rect x="497.5" y="72.5" width="11" height="11.5" fill="#fff" stroke="#b89a58" stroke-width="1"/><rect x="497.5" y="72.5" width="11" height="2" fill="#f0b030"/><path fill="none" d="M502 75.5 v8.5 M498 78.5 h10 M498 81.5 h10" stroke="#b89a58" stroke-width="0.8"/><path d="M494.5 76.5 h4 v-2.5 l4.5 4.5 -4.5 4.5 v-2.5 h-4z" fill="#fff0a0" stroke="#c09020" stroke-width="0.9"/><path d="M530 76 h6.5 v-3.8 l7 5.8 -7 5.8 v-3.8 h-6.5 q-1 0 -1 -2 q0 -2 1 -2z" fill="url(#ggreen)" stroke="#0a6a1a" stroke-width="1"/><path d="M566 75 h-8 v-3 l-5 4 5 4 v-3 h8z" fill="url(#ggreen)" stroke="#0a6a1a" stroke-width="0.9"/><path d="M554 80 h8 v-3 l5 4.5 -5 4.5 v-3 h-8z" fill="url(#ggreen)" stroke="#0a6a1a" stroke-width="0.9"/><path d="M580 71.5 h4.5 v7 h4 l-6.25 6.5 -6.25 -6.5 h4z" fill="url(#ggreen)" stroke="#0a6a1a" stroke-width="1"/><path d="M598.5 79.5 l3 -1.5 2.5 3.5 6.5 -10 2.5 1 -8.5 12.5z" fill="#8a8a8a" stroke="#8a8a8a" stroke-width="1" stroke-linejoin="round"/><path d="M623.5 73.5 q4 -3 9.5 -1 q4.5 2 1.5 6 q-3 3 -9 4 l-4 1.5 1 -3.5 q5.5 -1 9 -3 q1.5 -1.5 -1 -2 q-3 -0.8 -6 1.2z" fill="#8a8a8a" stroke="#888" stroke-width="1" stroke-linejoin="round"/><rect x="645.5" y="71.5" width="14" height="14" fill="#fafcff" stroke="#3a4a5a" stroke-width="1"/><rect x="646" y="72" width="13" height="2.5" fill="#2a5a9a"/><rect x="654" y="72" width="5" height="1.6" fill="#8ac8f0"/><path fill="none" d="M648 76.5 h9 M648 78.5 h9 M648 80.5 h6" stroke="#5a80b0" stroke-width="1"/><path d="M796.5 76.5 q0 -4 3 -4.5 M797 77 a2 2 0 1 0 4 0 a2 2 0 1 0 -4 0 M801 77 q0 -4 3 -4.5 M801.5 77 a2 2 0 1 0 4 0 a2 2 0 1 0 -4 0 M805 76 q1 -3.5 3 -2.5" fill="none" stroke="#2a7a4a" stroke-width="1"/><path d="M800 80.5 h6 v-2.5 l4.5 3.8 -4.5 3.8 v-2.5 h-6z" fill="#7ad88a" stroke="#2a8a4a" stroke-width="0.9"/><rect x="820.5" y="71.5" width="11" height="13.5" fill="#fbfff4" stroke="#b09048" stroke-width="1"/><path d="M823 73 v10 h3 M823 77 h3 M823 80 h3" fill="none" stroke="#30a050" stroke-width="1"/><path fill="none" d="M828.5 75 v1 M828.5 78 v1 M828.5 81 v1" stroke="#305070" stroke-width="1"/><rect x="682.5" y="543.5" width="14" height="14" rx="1" fill="#a8c0e8" stroke="#5a78b8" stroke-width="1"/><rect x="685" y="544" width="9" height="5.5" fill="#eef2d8"/><rect x="685.5" y="552" width="8" height="5.5" fill="#dfe8f8" stroke="#6080c0" stroke-width="0.8"/><rect x="710" y="544" width="12" height="2.2" fill="#1f4f8f"/><rect x="714" y="548" width="8" height="2.2" fill="#1f4f8f"/><rect x="716" y="552.3" width="6" height="2.2" fill="#1f4f8f"/><path d="M708.5 557 l1 -3 8 -8 2 2 -8 8z" fill="#f8d890" stroke="#a07030" stroke-width="0.9"/><path d="M708.5 557 l1 -3 2 2z" fill="#222"/><path d="M749 550 q0 -5 6 -5.5 v-2 l4 3.5 -4 3.5 v-2 q-3 0 -3.5 2.5z M757 551 q0 5 -6 5.5 v2 l-4 -3.5 4 -3.5 v2 q3 0 3.5 -2.5z" fill="#9ae89a" stroke="#18a018" stroke-width="1"/><rect x="769.5" y="548" width="5.5" height="5.5" rx="2.4" fill="#fff" stroke="#2a3a5a" stroke-width="1.2"/><rect x="776.5" y="548" width="5.5" height="5.5" rx="2.4" fill="#fff" stroke="#2a3a5a" stroke-width="1.2"/><path d="M775 550 q0.75 -0.8 1.5 0 M770 549 q1 -3.5 3.5 -3.5 M781.5 549 q1 -3.5 3.5 -2.5" fill="none" stroke="#2a3a5a" stroke-width="1.1"/><path d="M794.5 553 l1 -2.5 7 -7 2 2 -7 7z" fill="#f8d890" stroke="#a07030" stroke-width="0.9"/><path d="M799 551.5 h5 v-2.5 l4.5 4 -4.5 4 v-2.5 h-5z" fill="#8ac8d8" stroke="#3a6a9a" stroke-width="0.9"/><path d="M818 549 h4 v-2 l3.5 3 -3.5 3 v-2 h-4z" fill="#f8d050" stroke="#b08010" stroke-width="0.8"/><path fill="none" d="M827.5 546 v9 M827.5 550 h3 M827.5 554.5 h3 M828 546 h4" stroke="#5a7ab8" stroke-width="1"/><rect x="826" y="544.5" width="2.5" height="2.5" fill="#5a8ad0"/><rect x="830.5" y="549" width="2.5" height="2.5" fill="#5a8ad0"/><rect x="830.5" y="553.5" width="2.5" height="2.5" fill="#5a8ad0"/><path d="M843 543.5 h3 v4 h2.5 l-4 4 -4 -4 h2.5z" fill="#f8d860" stroke="#b08010" stroke-width="0.9"/><path d="M852 557 h3 v-4 h2.5 l-4 -4 -4 4 h2.5z" fill="#f8d860" stroke="#b08010" stroke-width="0.9"/><rect x="866.5" y="542.5" width="7" height="4" fill="#fff" stroke="#3a6aa0" stroke-width="1"/><path d="M870 547 h7.5 l3.5 3.5 v7 h-10.5z" fill="#fbfbf0" stroke="#b0a060" stroke-width="1"/><path d="M868 548 q0 5 6 5 v-2 l3 3.5 -3 3 v-2 q-7 0 -7.5 -7.5z" fill="#6ab0e8" stroke="#1a4a8a" stroke-width="0.9"/><rect x="891.5" y="543.5" width="12" height="6.5" fill="#eef8ee" stroke="#8a9aa8" stroke-width="1"/><rect x="891.5" y="550.5" width="12" height="7" fill="#eef4f8" stroke="#8a9aa8" stroke-width="1"/><rect x="893" y="545.5" width="2.5" height="2.5" fill="#2a9a4a"/><rect x="893" y="552.8" width="2.5" height="2.5" fill="#6a7a8a"/><rect x="896.5" y="546.5" width="5" height="0.9" fill="#445"/><rect x="896.5" y="553.8" width="5" height="0.9" fill="#445"/><rect x="914.5" y="543.5" width="13.5" height="13.5" fill="#f4f8fc" stroke="#4a6a9a" stroke-width="1"/><path d="M915 544 h4 l-4 4z" fill="#1a3a6a"/><path fill="none" d="M920 546.5 h6 M920 549.5 h7 M920 552.5 h7 M920 555.5 h7" stroke="#6a7ab0" stroke-width="1"/><rect x="938.5" y="543.5" width="9" height="13" fill="#f8f8f0" stroke="#b8a878" stroke-width="1"/><path d="M942.5 545.5 h7 l3 3 v9.5 h-10z" fill="#fafaf4" stroke="#b8a878" stroke-width="1"/><path fill="none" d="M944 548.5 h7 M944 550.5 h7 M944 552.5 h7 M944 554.5 h7" stroke="#5a6aa0" stroke-width="1"/><rect x="961.5" y="543.5" width="7" height="8" fill="#f4f6f8" stroke="#9aa0a8" stroke-width="1"/><rect x="969.5" y="548.5" width="7" height="9" fill="#f4f6f8" stroke="#9aa0a8" stroke-width="1"/><path fill="none" d="M963 545.5 h4 M963 547.5 h4 M963 549.5 h4 M971 551.5 h4 M971 553.5 h4 M971 555.5 h4" stroke="#4a5a7a" stroke-width="1"/><path d="M971 543.5 q3 0 3 3 M963 553 q0 3 3 3" fill="none" stroke="#1a3a6a" stroke-width="1"/><path d="M1003 548 l5.5 -4.5 q2.5 -1 4.5 1 q1.5 2 0 4 l-4.5 5.5z" fill="#f0c870" stroke="#8a6020" stroke-width="0.9"/><path d="M1003 548 l5 5 -3 3 q-3 0 -5.5 -2.5 q-2 -2.5 0.5 -3z" fill="#b0a8a0" stroke="#8a7a6a" stroke-width="0.8"/><path d="M998 556 q1 -4 3 -5 l3 3 q-1 2 -5 3z" fill="#fff8c8"/><path d="M1168 547 h6 v-3 l7.5 5.8 -7.5 5.8 v-3 h-6 q-1 -0.5 -1 -2.8 q0 -2.3 1 -2.8z" fill="url(#gyel)" stroke="#b08010" stroke-width="1"/><path d="M1200.5 542.5 h4 l2.5 2.5 v7 h-6.5z" fill="#f4f8f8" stroke="#a09070" stroke-width="1"/><rect x="1193.5" y="552.5" width="10" height="4.5" fill="#fff" stroke="#3a6a9a" stroke-width="1"/><path d="M1192 550 q1 -4 5 -4 v-2 l3.5 3 -3.5 3 v-2 q-3 0 -5 2z" fill="#6ac850" stroke="#2a7a2a" stroke-width="0.9"/><path d="M1217.5 544.5 h10 v8 l-5 5 h-5z" fill="#fffbe8" stroke="#c09a30" stroke-width="1"/><path fill="none" d="M1219.5 546.5 h6 M1219.5 548.5 h6 M1219.5 550.5 h5 M1219.5 552.5 h4" stroke="#4a5a7a" stroke-width="1"/><path fill="none" d="M1219 543 v2 M1221 543 v2 M1223 543 v2 M1225 543 v2" stroke="#333" stroke-width="0.8"/><path d="M1228 544.5 l1 2.5 2.2 1 -2.2 1 -1 2.5 -1 -2.5 -2.2 -1 2.2 -1z" fill="#ffe880" stroke="#c0a030" stroke-width="0.8"/><rect x="1240.5" y="543.5" width="12" height="12" rx="1" fill="#a8c0e8" stroke="#5a78b8" stroke-width="1"/><rect x="1243" y="544" width="7" height="4.5" fill="#eef2d8"/><rect x="1243.5" y="551" width="6" height="4.5" fill="#dfe8f8" stroke="#6080c0" stroke-width="0.8"/><rect x="1247" y="556.5" width="1.5" height="1.5" fill="#2a3a8a"/><rect x="1250" y="556.5" width="1.5" height="1.5" fill="#2a3a8a"/><rect x="1253" y="556.5" width="1.5" height="1.5" fill="#2a3a8a"/><path d="M1268.5 543.5 h4.5 v6 h4 l-6.25 7 -6.25 -7 h4z" fill="url(#gyel)" stroke="#b08010" stroke-width="1"/><path d="M91.5 104.5 v-2.5 q0 -1 1 -1 h3.5 q1 0 1.2 1 l0.3 1.2 h9 q0.8 0 0.8 0.8 v0.5z" fill="#a8c4e0" stroke="#6a8cb0" stroke-width="0.9"/><rect x="91.5" y="103.5" width="15.5" height="11.5" rx="1" fill="url(#gfold)" stroke="#5a80a8" stroke-width="1"/><path d="M91.5 123.5 v-2.5 q0 -1 1 -1 h3.5 q1 0 1.2 1 l0.3 1.2 h9 q0.8 0 0.8 0.8 v0.5z" fill="#a8c4e0" stroke="#6a8cb0" stroke-width="0.9"/><rect x="91.5" y="122.5" width="15.5" height="11.5" rx="1" fill="url(#gfold)" stroke="#5a80a8" stroke-width="1"/><path d="M91.5 142.5 v-2.5 q0 -1 1 -1 h3.5 q1 0 1.2 1 l0.3 1.2 h9 q0.8 0 0.8 0.8 v0.5z" fill="#a8c4e0" stroke="#6a8cb0" stroke-width="0.9"/><rect x="91.5" y="141.5" width="15.5" height="11.5" rx="1" fill="url(#gfold)" stroke="#5a80a8" stroke-width="1"/><path d="M91.5 161.5 v-2.5 q0 -1 1 -1 h3.5 q1 0 1.2 1 l0.3 1.2 h9 q0.8 0 0.8 0.8 v0.5z" fill="#a8c4e0" stroke="#6a8cb0" stroke-width="0.9"/><rect x="91.5" y="160.5" width="15.5" height="11.5" rx="1" fill="url(#gfold)" stroke="#5a80a8" stroke-width="1"/><path d="M91.5 180.5 v-2.5 q0 -1 1 -1 h3.5 q1 0 1.2 1 l0.3 1.2 h9 q0.8 0 0.8 0.8 v0.5z" fill="#a8c4e0" stroke="#6a8cb0" stroke-width="0.9"/><rect x="91.5" y="179.5" width="15.5" height="11.5" rx="1" fill="url(#gfold)" stroke="#5a80a8" stroke-width="1"/><path d="M91.5 199.5 v-2.5 q0 -1 1 -1 h3.5 q1 0 1.2 1 l0.3 1.2 h9 q0.8 0 0.8 0.8 v0.5z" fill="#a8c4e0" stroke="#6a8cb0" stroke-width="0.9"/><rect x="91.5" y="198.5" width="15.5" height="11.5" rx="1" fill="url(#gfold)" stroke="#5a80a8" stroke-width="1"/><path d="M91.5 218.5 v-2.5 q0 -1 1 -1 h3.5 q1 0 1.2 1 l0.3 1.2 h9 q0.8 0 0.8 0.8 v0.5z" fill="#a8c4e0" stroke="#6a8cb0" stroke-width="0.9"/><rect x="91.5" y="217.5" width="15.5" height="11.5" rx="1" fill="url(#gfold)" stroke="#5a80a8" stroke-width="1"/><path d="M91.5 237.5 v-2.5 q0 -1 1 -1 h3.5 q1 0 1.2 1 l0.3 1.2 h9 q0.8 0 0.8 0.8 v0.5z" fill="#a8c4e0" stroke="#6a8cb0" stroke-width="0.9"/><rect x="91.5" y="236.5" width="15.5" height="11.5" rx="1" fill="url(#gfold)" stroke="#5a80a8" stroke-width="1"/><path d="M91.5 256.5 v-2.5 q0 -1 1 -1 h3.5 q1 0 1.2 1 l0.3 1.2 h9 q0.8 0 0.8 0.8 v0.5z" fill="#a8c4e0" stroke="#6a8cb0" stroke-width="0.9"/><rect x="91.5" y="255.5" width="15.5" height="11.5" rx="1" fill="url(#gfold)" stroke="#5a80a8" stroke-width="1"/><path d="M91.5 275.5 v-2.5 q0 -1 1 -1 h3.5 q1 0 1.2 1 l0.3 1.2 h9 q0.8 0 0.8 0.8 v0.5z" fill="#a8c4e0" stroke="#6a8cb0" stroke-width="0.9"/><rect x="91.5" y="274.5" width="15.5" height="11.5" rx="1" fill="url(#gfold)" stroke="#5a80a8" stroke-width="1"/><path d="M91.5 294.5 v-2.5 q0 -1 1 -1 h3.5 q1 0 1.2 1 l0.3 1.2 h9 q0.8 0 0.8 0.8 v0.5z" fill="#a8c4e0" stroke="#6a8cb0" stroke-width="0.9"/><rect x="91.5" y="293.5" width="15.5" height="11.5" rx="1" fill="url(#gfold)" stroke="#5a80a8" stroke-width="1"/><path d="M91.5 313.5 v-2.5 q0 -1 1 -1 h3.5 q1 0 1.2 1 l0.3 1.2 h9 q0.8 0 0.8 0.8 v0.5z" fill="#a8c4e0" stroke="#6a8cb0" stroke-width="0.9"/><rect x="91.5" y="312.5" width="15.5" height="11.5" rx="1" fill="url(#gfold)" stroke="#5a80a8" stroke-width="1"/><path d="M91.5 332.5 v-2.5 q0 -1 1 -1 h3.5 q1 0 1.2 1 l0.3 1.2 h9 q0.8 0 0.8 0.8 v0.5z" fill="#a8c4e0" stroke="#6a8cb0" stroke-width="0.9"/><rect x="91.5" y="331.5" width="15.5" height="11.5" rx="1" fill="url(#gfold)" stroke="#5a80a8" stroke-width="1"/><path d="M91.5 351.5 v-2.5 q0 -1 1 -1 h3.5 q1 0 1.2 1 l0.3 1.2 h9 q0.8 0 0.8 0.8 v0.5z" fill="#a8c4e0" stroke="#6a8cb0" stroke-width="0.9"/><rect x="91.5" y="350.5" width="15.5" height="11.5" rx="1" fill="url(#gfold)" stroke="#5a80a8" stroke-width="1"/><path d="M91.5 370.5 v-2.5 q0 -1 1 -1 h3.5 q1 0 1.2 1 l0.3 1.2 h9 q0.8 0 0.8 0.8 v0.5z" fill="#a8c4e0" stroke="#6a8cb0" stroke-width="0.9"/><rect x="91.5" y="369.5" width="15.5" height="11.5" rx="1" fill="url(#gfold)" stroke="#5a80a8" stroke-width="1"/><path d="M91.5 389.5 v-2.5 q0 -1 1 -1 h3.5 q1 0 1.2 1 l0.3 1.2 h9 q0.8 0 0.8 0.8 v0.5z" fill="#a8c4e0" stroke="#6a8cb0" stroke-width="0.9"/><rect x="91.5" y="388.5" width="15.5" height="11.5" rx="1" fill="url(#gfold)" stroke="#5a80a8" stroke-width="1"/><path d="M91.5 408.5 v-2.5 q0 -1 1 -1 h3.5 q1 0 1.2 1 l0.3 1.2 h9 q0.8 0 0.8 0.8 v0.5z" fill="#a8c4e0" stroke="#6a8cb0" stroke-width="0.9"/><rect x="91.5" y="407.5" width="15.5" height="11.5" rx="1" fill="url(#gfold)" stroke="#5a80a8" stroke-width="1"/><path d="M91.5 427.5 v-2.5 q0 -1 1 -1 h3.5 q1 0 1.2 1 l0.3 1.2 h9 q0.8 0 0.8 0.8 v0.5z" fill="#a8c4e0" stroke="#6a8cb0" stroke-width="0.9"/><rect x="91.5" y="426.5" width="15.5" height="11.5" rx="1" fill="url(#gfold)" stroke="#5a80a8" stroke-width="1"/><path d="M91.5 446.5 v-2.5 q0 -1 1 -1 h3.5 q1 0 1.2 1 l0.3 1.2 h9 q0.8 0 0.8 0.8 v0.5z" fill="#a8c4e0" stroke="#6a8cb0" stroke-width="0.9"/><rect x="91.5" y="445.5" width="15.5" height="11.5" rx="1" fill="url(#gfold)" stroke="#5a80a8" stroke-width="1"/><path d="M91.5 465.5 v-2.5 q0 -1 1 -1 h3.5 q1 0 1.2 1 l0.3 1.2 h9 q0.8 0 0.8 0.8 v0.5z" fill="#a8c4e0" stroke="#6a8cb0" stroke-width="0.9"/><rect x="91.5" y="464.5" width="15.5" height="11.5" rx="1" fill="url(#gfold)" stroke="#5a80a8" stroke-width="1"/><path d="M91.5 484.5 v-2.5 q0 -1 1 -1 h3.5 q1 0 1.2 1 l0.3 1.2 h9 q0.8 0 0.8 0.8 v0.5z" fill="#a8c4e0" stroke="#6a8cb0" stroke-width="0.9"/><rect x="91.5" y="483.5" width="15.5" height="11.5" rx="1" fill="url(#gfold)" stroke="#5a80a8" stroke-width="1"/><path d="M91.5 503.5 v-2.5 q0 -1 1 -1 h3.5 q1 0 1.2 1 l0.3 1.2 h9 q0.8 0 0.8 0.8 v0.5z" fill="#a8c4e0" stroke="#6a8cb0" stroke-width="0.9"/><rect x="91.5" y="502.5" width="15.5" height="11.5" rx="1" fill="url(#gfold)" stroke="#5a80a8" stroke-width="1"/><path d="M91.5 522.5 v-2.5 q0 -1 1 -1 h3.5 q1 0 1.2 1 l0.3 1.2 h9 q0.8 0 0.8 0.8 v0.5z" fill="#a8c4e0" stroke="#6a8cb0" stroke-width="0.9"/><rect x="91.5" y="521.5" width="15.5" height="11.5" rx="1" fill="url(#gfold)" stroke="#5a80a8" stroke-width="1"/><path d="M91.5 541.5 v-2.5 q0 -1 1 -1 h3.5 q1 0 1.2 1 l0.3 1.2 h9 q0.8 0 0.8 0.8 v0.5z" fill="#a8c4e0" stroke="#6a8cb0" stroke-width="0.9"/><rect x="91.5" y="540.5" width="15.5" height="11.5" rx="1" fill="url(#gfold)" stroke="#5a80a8" stroke-width="1"/><path d="M91.5 560.5 v-2.5 q0 -1 1 -1 h3.5 q1 0 1.2 1 l0.3 1.2 h9 q0.8 0 0.8 0.8 v0.5z" fill="#a8c4e0" stroke="#6a8cb0" stroke-width="0.9"/><rect x="91.5" y="559.5" width="15.5" height="11.5" rx="1" fill="url(#gfold)" stroke="#5a80a8" stroke-width="1"/><path d="M91.5 579.5 v-2.5 q0 -1 1 -1 h3.5 q1 0 1.2 1 l0.3 1.2 h9 q0.8 0 0.8 0.8 v0.5z" fill="#a8c4e0" stroke="#6a8cb0" stroke-width="0.9"/><rect x="91.5" y="578.5" width="15.5" height="11.5" rx="1" fill="url(#gfold)" stroke="#5a80a8" stroke-width="1"/><path d="M91.5 598.5 v-2.5 q0 -1 1 -1 h3.5 q1 0 1.2 1 l0.3 1.2 h9 q0.8 0 0.8 0.8 v0.5z" fill="#a8c4e0" stroke="#6a8cb0" stroke-width="0.9"/><rect x="91.5" y="597.5" width="15.5" height="11.5" rx="1" fill="url(#gfold)" stroke="#5a80a8" stroke-width="1"/><path d="M91.5 617.5 v-2.5 q0 -1 1 -1 h3.5 q1 0 1.2 1 l0.3 1.2 h9 q0.8 0 0.8 0.8 v0.5z" fill="#a8c4e0" stroke="#6a8cb0" stroke-width="0.9"/><rect x="91.5" y="616.5" width="15.5" height="11.5" rx="1" fill="url(#gfold)" stroke="#5a80a8" stroke-width="1"/><path d="M91.5 636.5 v-2.5 q0 -1 1 -1 h3.5 q1 0 1.2 1 l0.3 1.2 h9 q0.8 0 0.8 0.8 v0.5z" fill="#a8c4e0" stroke="#6a8cb0" stroke-width="0.9"/><rect x="91.5" y="635.5" width="15.5" height="11.5" rx="1" fill="url(#gfold)" stroke="#5a80a8" stroke-width="1"/><path d="M91.5 655.5 v-2.5 q0 -1 1 -1 h3.5 q1 0 1.2 1 l0.3 1.2 h9 q0.8 0 0.8 0.8 v0.5z" fill="#a8c4e0" stroke="#6a8cb0" stroke-width="0.9"/><rect x="91.5" y="654.5" width="15.5" height="11.5" rx="1" fill="url(#gfold)" stroke="#5a80a8" stroke-width="1"/><path d="M91.5 674.5 v-2.5 q0 -1 1 -1 h3.5 q1 0 1.2 1 l0.3 1.2 h9 q0.8 0 0.8 0.8 v0.5z" fill="#a8c4e0" stroke="#6a8cb0" stroke-width="0.9"/><rect x="91.5" y="673.5" width="15.5" height="11.5" rx="1" fill="url(#gfold)" stroke="#5a80a8" stroke-width="1"/><path d="M91.5 693.5 v-2.5 q0 -1 1 -1 h3.5 q1 0 1.2 1 l0.3 1.2 h9 q0.8 0 0.8 0.8 v0.5z" fill="#a8c4e0" stroke="#6a8cb0" stroke-width="0.9"/><rect x="91.5" y="692.5" width="15.5" height="11.5" rx="1" fill="url(#gfold)" stroke="#5a80a8" stroke-width="1"/><path d="M91.5 712.5 v-2.5 q0 -1 1 -1 h3.5 q1 0 1.2 1 l0.3 1.2 h9 q0.8 0 0.8 0.8 v0.5z" fill="#a8c4e0" stroke="#6a8cb0" stroke-width="0.9"/><rect x="91.5" y="711.5" width="15.5" height="11.5" rx="1" fill="url(#gfold)" stroke="#5a80a8" stroke-width="1"/><path d="M91.5 731.5 v-2.5 q0 -1 1 -1 h3.5 q1 0 1.2 1 l0.3 1.2 h9 q0.8 0 0.8 0.8 v0.5z" fill="#a8c4e0" stroke="#6a8cb0" stroke-width="0.9"/><rect x="91.5" y="730.5" width="15.5" height="11.5" rx="1" fill="url(#gfold)" stroke="#5a80a8" stroke-width="1"/><path d="M91.5 750.5 v-2.5 q0 -1 1 -1 h3.5 q1 0 1.2 1 l0.3 1.2 h9 q0.8 0 0.8 0.8 v0.5z" fill="#a8c4e0" stroke="#6a8cb0" stroke-width="0.9"/><rect x="91.5" y="749.5" width="15.5" height="11.5" rx="1" fill="url(#gfold)" stroke="#5a80a8" stroke-width="1"/><path d="M91.5 769.5 v-2.5 q0 -1 1 -1 h3.5 q1 0 1.2 1 l0.3 1.2 h9 q0.8 0 0.8 0.8 v0.5z" fill="#a8c4e0" stroke="#6a8cb0" stroke-width="0.9"/><rect x="91.5" y="768.5" width="15.5" height="11.5" rx="1" fill="url(#gfold)" stroke="#5a80a8" stroke-width="1"/><path d="M91.5 788.5 v-2.5 q0 -1 1 -1 h3.5 q1 0 1.2 1 l0.3 1.2 h9 q0.8 0 0.8 0.8 v0.5z" fill="#a8c4e0" stroke="#6a8cb0" stroke-width="0.9"/><rect x="91.5" y="787.5" width="15.5" height="11.5" rx="1" fill="url(#gfold)" stroke="#5a80a8" stroke-width="1"/><path d="M91.5 807.5 v-2.5 q0 -1 1 -1 h3.5 q1 0 1.2 1 l0.3 1.2 h9 q0.8 0 0.8 0.8 v0.5z" fill="#a8c4e0" stroke="#6a8cb0" stroke-width="0.9"/><rect x="91.5" y="806.5" width="15.5" height="11.5" rx="1" fill="url(#gfold)" stroke="#5a80a8" stroke-width="1"/><path d="M91.5 826.5 v-2.5 q0 -1 1 -1 h3.5 q1 0 1.2 1 l0.3 1.2 h9 q0.8 0 0.8 0.8 v0.5z" fill="#a8c4e0" stroke="#6a8cb0" stroke-width="0.9"/><rect x="91.5" y="825.5" width="15.5" height="11.5" rx="1" fill="url(#gfold)" stroke="#5a80a8" stroke-width="1"/><path d="M91.5 845.5 v-2.5 q0 -1 1 -1 h3.5 q1 0 1.2 1 l0.3 1.2 h9 q0.8 0 0.8 0.8 v0.5z" fill="#a8c4e0" stroke="#6a8cb0" stroke-width="0.9"/><rect x="91.5" y="844.5" width="15.5" height="11.5" rx="1" fill="url(#gfold)" stroke="#5a80a8" stroke-width="1"/><path d="M91.5 864.5 v-2.5 q0 -1 1 -1 h3.5 q1 0 1.2 1 l0.3 1.2 h9 q0.8 0 0.8 0.8 v0.5z" fill="#a8c4e0" stroke="#6a8cb0" stroke-width="0.9"/><rect x="91.5" y="863.5" width="15.5" height="11.5" rx="1" fill="url(#gfold)" stroke="#5a80a8" stroke-width="1"/><path d="M91.5 883.5 v-2.5 q0 -1 1 -1 h3.5 q1 0 1.2 1 l0.3 1.2 h9 q0.8 0 0.8 0.8 v0.5z" fill="#a8c4e0" stroke="#6a8cb0" stroke-width="0.9"/><rect x="91.5" y="882.5" width="15.5" height="11.5" rx="1" fill="url(#gfold)" stroke="#5a80a8" stroke-width="1"/><path d="M91.5 902.5 v-2.5 q0 -1 1 -1 h3.5 q1 0 1.2 1 l0.3 1.2 h9 q0.8 0 0.8 0.8 v0.5z" fill="#a8c4e0" stroke="#6a8cb0" stroke-width="0.9"/><rect x="91.5" y="901.5" width="15.5" height="11.5" rx="1" fill="url(#gfold)" stroke="#5a80a8" stroke-width="1"/><path d="M71.5 921.5 v-2.5 q0 -1 1 -1 h3.5 q1 0 1.2 1 l0.3 1.2 h9 q0.8 0 0.8 0.8 v0.5z" fill="#a8c4e0" stroke="#6a8cb0" stroke-width="0.9"/><rect x="71.5" y="920.5" width="15.5" height="11.5" rx="1" fill="url(#gfold)" stroke="#5a80a8" stroke-width="1"/><path d="M71.5 940.5 v-2.5 q0 -1 1 -1 h3.5 q1 0 1.2 1 l0.3 1.2 h9 q0.8 0 0.8 0.8 v0.5z" fill="#a8c4e0" stroke="#6a8cb0" stroke-width="0.9"/><rect x="71.5" y="939.5" width="15.5" height="11.5" rx="1" fill="url(#gfold)" stroke="#5a80a8" stroke-width="1"/><path d="M1232.8 185.2 L1232.8 197.3 L1235.6 194.6 L1238 200.2 L1240.6 199.1 L1238.2 193.8 L1242 193.8 Z" fill="#000" stroke="#fff" stroke-width="1.6" paint-order="stroke" stroke-linejoin="round" style="filter:drop-shadow(0.5px 1px 1px rgba(0,0,0,0.35))"/></svg>
</div></body></html>
